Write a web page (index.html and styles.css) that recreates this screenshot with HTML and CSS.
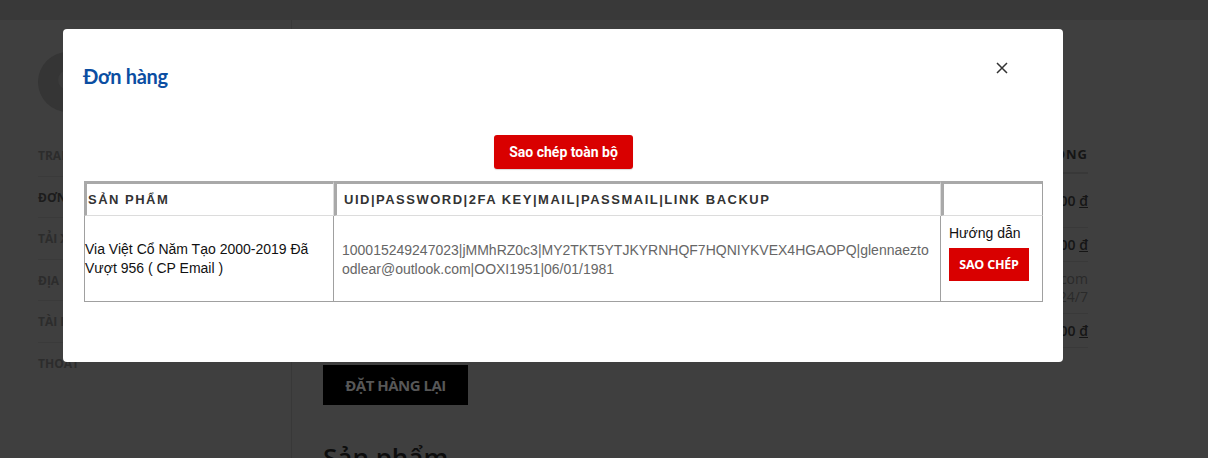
FILE: index.html
```html
<!DOCTYPE html>
<html lang="vi">
<head>
<meta charset="utf-8">
<title>Đơn hàng</title>
<link rel="stylesheet" href="styles.css">
</head>
<body>
<div class="page">
  <div class="topbar"></div>
  <div class="layout">
    <aside class="sidebar">
      <div class="avatar"><div class="avatar-head"></div></div>
      <ul class="menu">
        <li>TRANG TÀI KHOẢN</li>
        <li class="active">ĐƠN HÀNG</li>
        <li>TẢI XUỐNG</li>
        <li>ĐỊA CHỈ</li>
        <li>TÀI KHOẢN</li>
        <li>THOÁT</li>
      </ul>
    </aside>
    <main class="main">
      <div class="summary">
        <div class="srow shead"><span>SẢN PHẨM</span><span>TỔNG CỘNG</span></div>
        <div class="srow s1"><span>Via Việt Cổ × 1</span><span class="money">100.000 <u>đ</u></span></div>
        <div class="srow s2"><span>Tổng số phụ:</span><span class="money">100.000 <u>đ</u></span></div>
        <div class="srow s3"><span>Phương thức thanh toán:</span><span class="note">Chuyển khoản qua thanhtoan.com<br>Hỗ trợ 24/7</span></div>
        <div class="srow s4"><span>Tổng cộng:</span><span class="money">100.000 <u>đ</u></span></div>
      </div>
      <button class="reorder">ĐẶT HÀNG LẠI</button>
      <h2 class="section-title">Sản phẩm</h2>
    </main>
  </div>
</div>

<div class="modal">
  <div class="modal-header">
    <h3 class="modal-title">Đơn hàng</h3>
    <button class="close" aria-label="Đóng">
      <svg width="12" height="12" viewBox="0 0 12 12"><path d="M1 1L11 11M11 1L1 11" stroke="#333" stroke-width="1.5" fill="none"/></svg>
    </button>
  </div>
  <div class="modal-body">
    <button class="copy-all">Sao chép toàn bộ</button>
    <table class="orders">
      <colgroup><col class="c1"><col class="c2"><col class="c3"></colgroup>
      <thead>
        <tr><th>SẢN PHẨM</th><th class="th2">UID|PASSWORD|2FA KEY|MAIL|PASSMAIL|LINK BACKUP</th><th></th></tr>
      </thead>
      <tbody>
        <tr>
          <td class="prod">Via Việt Cổ Năm Tạo 2000-2019 Đã Vượt 956 ( CP Email )</td>
          <td class="data">100015249247023|jMMhRZ0c3|MY2TKT5YTJKYRNHQF7HQNIYKVEX4HGAOPQ|glennaeztoodlear@outlook.com|OOXI1951|06/01/1981</td>
          <td class="act"><div class="guide">Hướng dẫn</div><button class="copy">SAO CHÉP</button></td>
        </tr>
      </tbody>
    </table>
  </div>
</div>
</body>
</html>
```
FILE: styles.css
```css
* { box-sizing: border-box; }
html, body { margin: 0; padding: 0; }
body {
  width: 1208px;
  height: 458px;
  overflow: hidden;
  background: #3f3f3f;
  font-family: "Open Sans", "Liberation Sans", sans-serif;
}
.page { width: 1208px; height: 458px; }
.topbar { height: 20px; background: #393939; }
.layout { display: flex; height: 438px; }
.sidebar {
  width: 292px;
  flex: none;
  padding: 32px 30px 0 38px;
  border-right: 1px solid #383838;
}
.avatar {
  width: 60px; height: 60px; border-radius: 50%;
  background: #353535;
  position: relative;
  overflow: hidden;
}
.avatar-head {
  position: absolute; left: 20px; top: 18px;
  width: 20px; height: 20px; border-radius: 50%;
  background: #3b3b3b;
}
.menu { list-style: none; margin: 23px 0 0; padding: 0; }
.menu li {
  height: 41.5px;
  line-height: 41px;
  font-size: 12px;
  font-weight: 700;
  color: #2c2c2c;
  border-bottom: 1px solid #3a3a3a;
}
.menu li.active { color: #1c1c1c; }
.menu li:last-child { border-bottom: none; }
.main { flex: 1; padding: 115px 120px 0 31px; }
.summary { width: 765px; }
.srow {
  display: flex; justify-content: space-between; align-items: center;
  border-bottom: 1px solid #393939;
  font-size: 14px;
  color: #151515;
}
.shead { height: 39px; font-weight: 700; font-size: 13px; letter-spacing: 1px; border-bottom: 2px solid #383838; }
.s1 { height: 54px; }
.s2 { height: 34px; }
.s3 { height: 52px; }
.s4 { height: 34px; }
.money { font-weight: 600; }
.note { text-align: right; color: #2a2a2a; line-height: 18px; }
.reorder {
  display: block;
  margin-top: 17px;
  width: 145px; height: 40px;
  background: #000; border: none;
  color: #575757;
  font-family: "Open Sans", sans-serif;
  font-weight: 700; font-size: 15px;
  letter-spacing: -0.5px;
}
.section-title {
  margin: 34px 0 0;
  font-size: 26px; font-weight: 600;
  color: #0d0d0d;
}

/* Modal */
.modal {
  position: absolute;
  left: 63px; top: 29px;
  width: 1000px; height: 333px;
  background: #fff;
  border-radius: 4px;
}
.modal-header {
  display: flex; justify-content: space-between; align-items: flex-start;
  padding: 35px 20px 0 20px;
}
.modal-title {
  margin: 0;
  font-family: Lato, "Open Sans", sans-serif;
  font-size: 20px; line-height: 24px; font-weight: 700;
  color: #0b4ea2;
  letter-spacing: -0.3px;
}
.close {
  margin: -2px 35px 0 0;
  width: 12px; height: 12px; padding: 0;
  border: none; background: none;
  display: flex;
}
.modal-body {
  padding: 47px 20px 0 21px;
  display: flex; flex-direction: column; align-items: center;
}
.copy-all {
  width: 139px; height: 34px;
  background: #d90000; color: #fff;
  border: none; border-radius: 3px;
  box-shadow: 0 1px 1px rgba(0,0,0,0.15);
  font-family: Roboto, "Liberation Sans", sans-serif;
  font-weight: 700; font-size: 14px;
  padding: 0;
}
.orders {
  margin-top: 12px;
  width: 959px;
  table-layout: fixed;
  border-collapse: separate;
  border-spacing: 0;
  font-family: "Liberation Sans", Arial, sans-serif;
}
.c1 { width: 250px; }
.c2 { width: 607px; }
.c3 { width: 102px; }
.orders th {
  height: 35px;
  padding: 0 0 0 1px;
  text-align: left;
  font-size: 13px; font-weight: 700;
  letter-spacing: 1.5px;
  color: #333;
  border-top: 3px solid #a9a9a9;
  border-left: 3px solid #a9a9a9;
  border-right: 1px solid #dcdcdc;
  border-bottom: 1px solid #dcdcdc;
}
.orders th.th2 { padding-left: 7px; }
.orders th:last-child { border-right: 1px solid #a0a0a0; }
.orders td {
  height: 86px;
  vertical-align: middle;
  font-size: 14px;
  line-height: 19px;
  border-right: 1px solid #a0a0a0;
  border-bottom: 1px solid #a0a0a0;
  padding: 0 8px;
}
.orders td.prod { border-left: 1px solid #a0a0a0; padding: 0 4px 0 0; color: #111; }
.orders td.data { color: #666; word-break: break-all; padding-top: 2px; }
.orders td.act { vertical-align: top; padding-top: 8px; color: #111; }
.guide { line-height: 18px; }
.copy {
  margin-top: 6px;
  width: 80px; height: 33px;
  background: #d90000; color: #fff;
  border: none; padding: 0;
  font-family: "Open Sans", sans-serif;
  font-weight: 700; font-size: 12.5px;
  letter-spacing: -0.2px;
}
```
